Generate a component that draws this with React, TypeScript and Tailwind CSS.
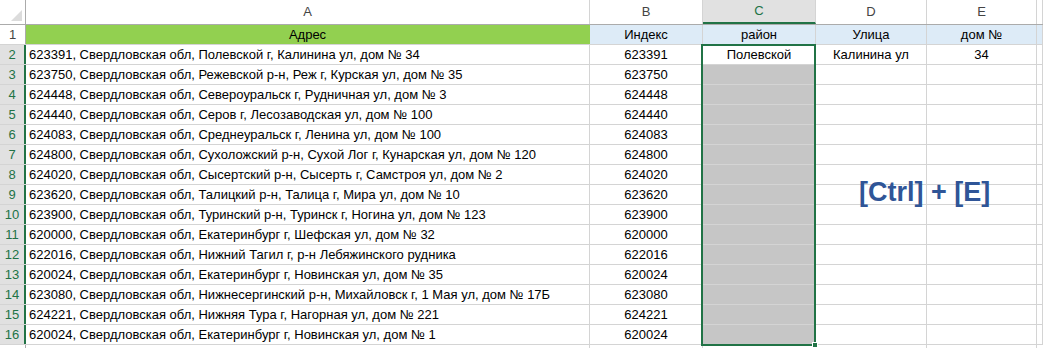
import React from "react"

const rows: [string, string][] = [
    ["623391, Свердловская обл, Полевской г, Калинина ул, дом № 34", "623391"],
    ["623750, Свердловская обл, Режевской р-н, Реж г, Курская ул, дом № 35", "623750"],
    ["624448, Свердловская обл, Североуральск г, Рудничная ул, дом № 3", "624448"],
    ["624440, Свердловская обл, Серов г, Лесозаводская ул, дом № 100", "624440"],
    ["624083, Свердловская обл, Среднеуральск г, Ленина ул, дом № 100", "624083"],
    ["624800, Свердловская обл, Сухоложский р-н, Сухой Лог г, Кунарская ул, дом № 120", "624800"],
    ["624020, Свердловская обл, Сысертский р-н, Сысерть г, Самстроя ул, дом № 2", "624020"],
    ["623620, Свердловская обл, Талицкий р-н, Талица г, Мира ул, дом № 10", "623620"],
    ["623900, Свердловская обл, Туринский р-н, Туринск г, Ногина ул, дом № 123", "623900"],
    ["620000, Свердловская обл, Екатеринбург г, Шефская ул, дом № 32", "620000"],
    ["622016, Свердловская обл, Нижний Тагил г, р-н Лебяжинского рудника", "622016"],
    ["620024, Свердловская обл, Екатеринбург г, Новинская ул, дом № 35", "620024"],
    ["623080, Свердловская обл, Нижнесергинский р-н, Михайловск г, 1 Мая ул, дом № 17Б", "623080"],
    ["624221, Свердловская обл, Нижняя Тура г, Нагорная ул, дом № 221", "624221"],
    ["620024, Свердловская обл, Екатеринбург г, Новинская ул, дом № 1", "620024"],
]

const cell = "h-full shrink-0 border-r border-[#d4d4d4] flex items-center"

export default function App() {
    return (
        <div className="relative w-[1043px] h-[348px] overflow-hidden bg-white text-[13px] text-black font-['Liberation_Sans',sans-serif]">
            {/* column letters */}
            <div className="flex h-[25px] border-b border-[#ababab] text-[#444]">
                <div className="relative w-[26px] h-full shrink-0 border-r border-[#ababab]">
                    <svg className="absolute right-[3px] bottom-[3px]" width="11" height="11">
                        <polygon points="11,0 11,11 0,11" fill="#dcdcdc" />
                    </svg>
                </div>
                <div className={`${cell} w-[564px] justify-center`}>A</div>
                <div className={`${cell} w-[113px] justify-center`}>B</div>
                <div className="h-full shrink-0 w-[113px] flex items-center justify-center bg-[#e1e1e1] text-[#217346] border-b-2 border-[#217346] border-r border-r-[#d4d4d4]">C</div>
                <div className={`${cell} w-[111px] justify-center`}>D</div>
                <div className={`${cell} w-[110px] justify-center`}>E</div>
                <div className={`${cell} flex-1`} />
            </div>

            {/* header row */}
            <div className="flex h-[20px] border-b border-[#d4d4d4]">
                <div className="w-[26px] h-full shrink-0 border-r border-[#ababab] flex items-center justify-center text-[#444]">1</div>
                <div className="h-full shrink-0 w-[564px] bg-[#92d050] border-r border-[#92d050] flex items-center justify-center">Адрес</div>
                <div className={`${cell} w-[113px] justify-center bg-[#ddebf7]`}>Индекс</div>
                <div className={`${cell} w-[113px] justify-center bg-[#ddebf7]`}>район</div>
                <div className={`${cell} w-[111px] justify-center bg-[#ddebf7]`}>Улица</div>
                <div className={`${cell} w-[110px] justify-center bg-[#ddebf7]`}>дом №</div>
                <div className={`${cell} flex-1 bg-[#ddebf7]`} />
            </div>

            {/* data rows */}
            {rows.map(([addr, idx], i) => (
                <div key={i} className="flex h-[20px] border-b border-[#d4d4d4]">
                    <div className="w-[26px] h-full shrink-0 bg-[#e1e1e1] border-r-2 border-[#217346] flex items-center justify-center text-[#217346]">{i + 2}</div>
                    <div className={`${cell} w-[564px] pl-[3px] whitespace-nowrap overflow-hidden`}>{addr}</div>
                    <div className={`${cell} w-[113px] justify-center`}>{idx}</div>
                    {i === 0 ? (
                        <div className={`${cell} w-[113px] justify-center`}>Полевской</div>
                    ) : (
                        <div className="h-full shrink-0 w-[113px] bg-[#c6c6c6] border-r border-[#d4d4d4]" />
                    )}
                    <div className={`${cell} w-[111px] justify-center`}>{i === 0 ? "Калинина ул" : ""}</div>
                    <div className={`${cell} w-[110px] justify-center`}>{i === 0 ? "34" : ""}</div>
                    <div className={`${cell} flex-1`} />
                </div>
            ))}
            <div className="flex h-[20px]">
                <div className="w-[26px] h-full shrink-0 border-r border-[#ababab]" />
                <div className={`${cell} w-[564px]`} />
                <div className={`${cell} w-[113px]`} />
                <div className={`${cell} w-[113px]`} />
                <div className={`${cell} w-[111px]`} />
                <div className={`${cell} w-[110px]`} />
            </div>

            {/* selection C2:C16 */}
            <div className="absolute left-[701px] top-[44px] w-[115px] h-[302px] border-2 border-[#217346] pointer-events-none" />
            <div className="absolute left-[812px] top-[342px] w-[6px] h-[6px] bg-[#217346] border border-white" />

            {/* overlay hint */}
            <div className="absolute left-[859px] top-[179px] text-[27px] font-bold text-[#2f5597] leading-none">
                [Ctrl] + [E]
            </div>
        </div>
    )
}
